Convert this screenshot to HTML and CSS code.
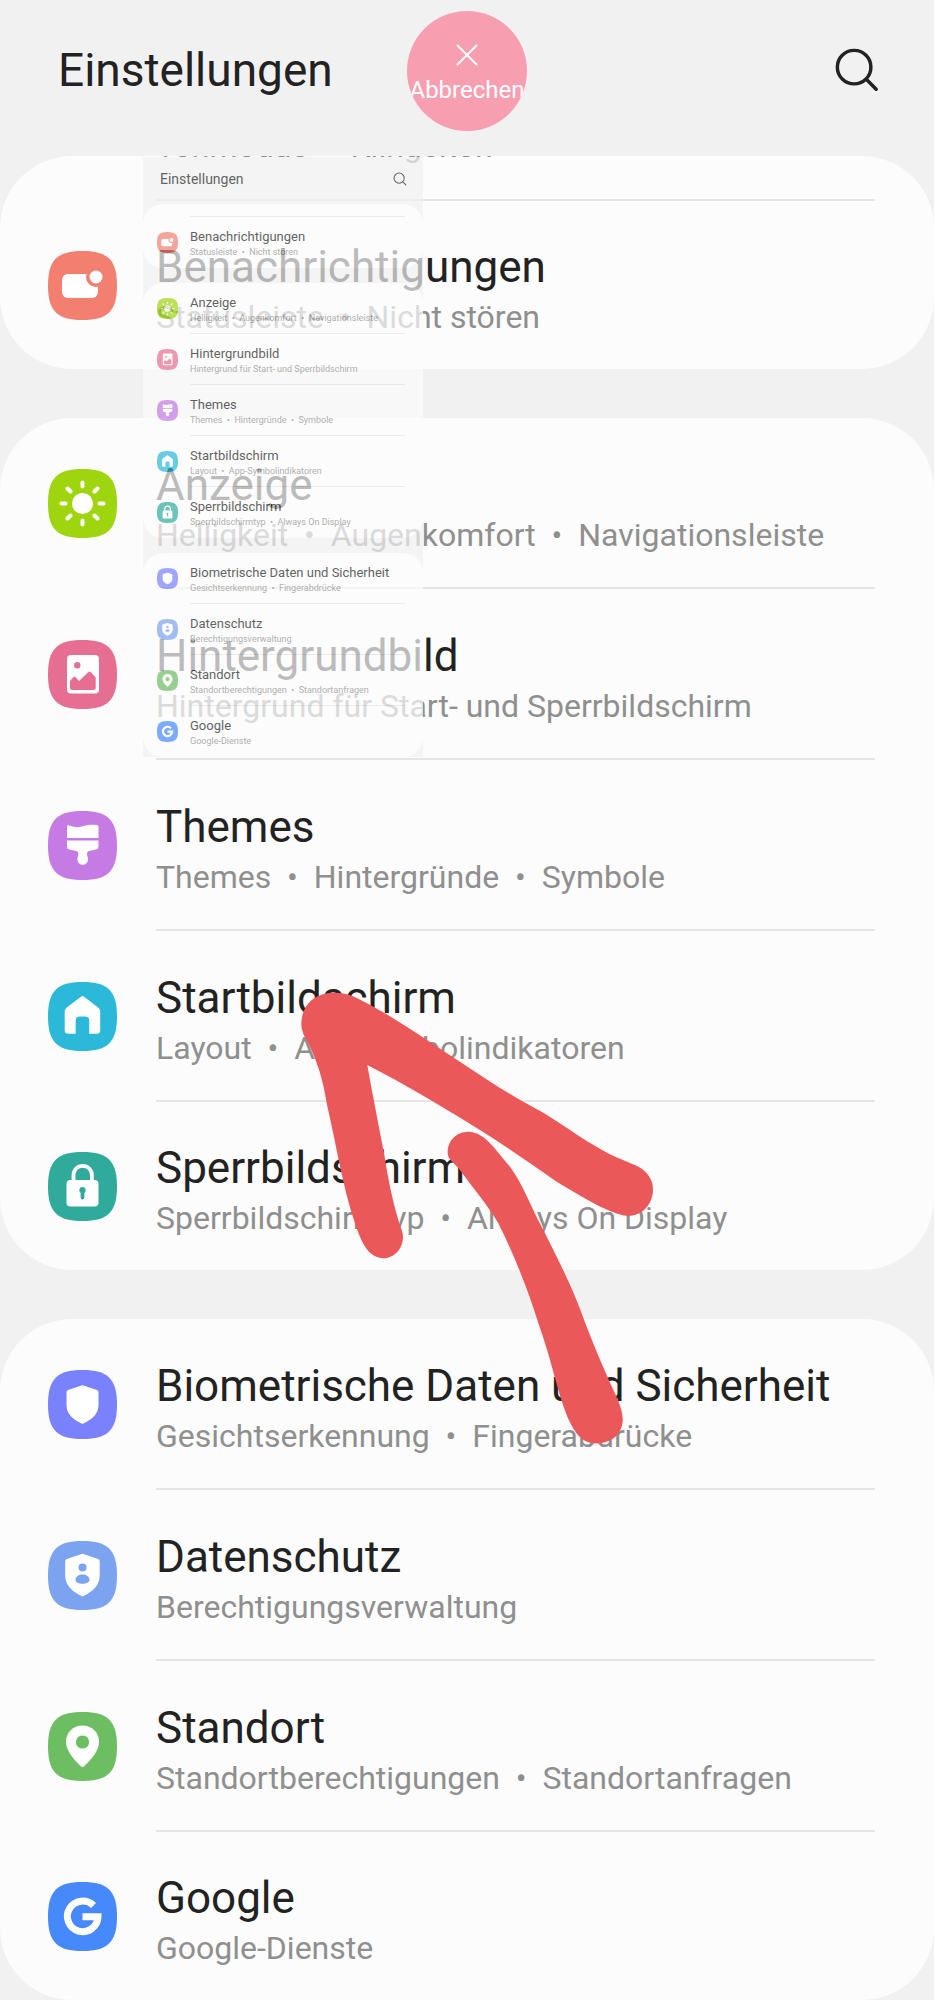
FILE: index.html
```html
<!DOCTYPE html>
<html lang="de">
<head>
    <meta charset="UTF-8">
    <meta name="viewport" content="width=device-width, initial-scale=1.0">
    <title>Einstellungen</title>
    <link rel="stylesheet" href="styles.css">
</head>
<body>
    <!-- Icons -->
    <svg class="sprite" aria-hidden="true">
        <symbol id="search" viewBox="0 0 48 48">
            <path d="M34.500 34.500L44 44M38.500 21A17.500 17.500 0 1 1 3.500 21A17.500 17.500 0 0 1 38.500 21Z" fill="none" stroke="#222" stroke-width="3.600" stroke-linecap="round"/>
        </symbol>
        <symbol id="tile" viewBox="0 0 69 69">
            <path d="M34.500 0C60 0 69 9 69 34.500S60 69 34.500 69 0 60 0 34.500 9 0 34.500 0Z"/>
        </symbol>
        <symbol id="notifications" viewBox="0 0 69 69">
            <use href="#tile" fill="#f37f70"/>
            <rect x="14" y="23" width="36" height="24" rx="6" fill="#fff"/>
            <circle cx="48" cy="26" r="10" fill="#f37f70"/>
            <circle cx="48" cy="26" r="6.500" fill="#fff"/>
        </symbol>
        <symbol id="display" viewBox="0 0 69 69">
            <use href="#tile" fill="#9fd50f"/>
            <circle cx="34.500" cy="34.500" r="10.500" fill="#fff"/>
            <path d="M34.500 13.500v4M34.500 51.500v4M13.500 34.500h4M51.500 34.500h4M19.500 19.500l3 3M46.500 46.500l3 3M49.500 19.500l-3 3M22.500 46.500l-3 3" stroke="#fff" stroke-width="4" stroke-linecap="round"/>
        </symbol>
        <symbol id="wallpaper" viewBox="0 0 69 69">
            <use href="#tile" fill="#e66e93"/>
            <rect x="19" y="15" width="32" height="38.500" rx="4" fill="#fff"/>
            <circle cx="29.300" cy="25.300" r="3.200" fill="#e66e93"/>
            <path d="M22 41l3.500-4q1-1 2 0l3.500 4 9.500-9q1.200-1 2.200 0l5 5.500v10.500q0 2-2 2h-21.700q-2 0-2-2z" fill="#e66e93"/>
        </symbol>
        <symbol id="themes" viewBox="0 0 69 69">
            <use href="#tile" fill="#c57be3"/>
            <path d="M19 15.500q0-1.500 1.500-1.200c5 1.500 8 2.700 13 1.200s9-2 15.500-1.500q1.500 0 1.500 1.500v11.500h-31.500z" fill="#fff"/>
            <path d="M19 29.500h31.500v6q0 2.500-2.500 3l-7 1.500q-2 .5-2 2.500c0 2 1 4 1 6a5.300 5.300 0 0 1-10.600 0c0-2 1-4 1-6q0-2-2-2.500l-7-1.500q-2.400-.5-2.400-3z" fill="#fff"/>
        </symbol>
        <symbol id="home" viewBox="0 0 69 69">
            <use href="#tile" fill="#2bb8d9"/>
            <path d="M33 14.700q1.500-1.200 3 0l14.500 11q1.700 1.500 1.700 3.500v19q0 3.500-3.500 3.500h-7.500v-13.200q0-4-4-4h-5.500q-4 0-4 4v13.200h-7.500q-3.500 0-3.500-3.500v-19q0-2 1.700-3.500z" fill="#fff"/>
        </symbol>
        <symbol id="lock" viewBox="0 0 69 69">
            <use href="#tile" fill="#30ab9b"/>
            <path d="M25.500 30v-7a9.200 9.200 0 0 1 18.400 0v7" fill="none" stroke="#fff" stroke-width="3.800"/>
            <rect x="18.500" y="28" width="32" height="26.500" rx="4" fill="#fff"/>
            <path d="M34.500 35a3.300 3.300 0 0 1 1.900 6v4.500a1.900 1.900 0 0 1-3.800 0V41a3.300 3.300 0 0 1 1.900-6z" fill="#30ab9b"/>
        </symbol>
        <symbol id="shield" viewBox="0 0 69 69">
            <use href="#tile" fill="#7981fc"/>
            <path d="M33.500 15.500q1-.4 2 0l13.500 4.500q1.500.5 1.500 2V35c0 9-6 14-15 18.500q-1 .4-2 0C24.500 49 18.500 44 18.500 35V22q0-1.500 1.500-2z" fill="#fff"/>
        </symbol>
        <symbol id="privacy" viewBox="0 0 69 69">
            <use href="#tile" fill="#7ba3f0"/>
            <path d="M33.500 13q1-.4 2 0L50 18q1.700.6 1.700 2.300V34.500c0 10-7 16-16.200 20.500q-1 .4-2 0C24.300 50.500 17.200 44.500 17.200 34.500V20.300q0-1.700 1.700-2.300z" fill="#fff"/>
            <circle cx="34.500" cy="26.500" r="4" fill="#7ba3f0"/>
            <path d="M27.500 39c0-7.500 14-7.500 14 0 0 5-14 5-14 0z" fill="#7ba3f0"/>
        </symbol>
        <symbol id="location" viewBox="0 0 69 69">
            <use href="#tile" fill="#6dbd63"/>
            <path d="M34.500 13.500c9.500 0 16.500 7 16.500 16.200 0 9-7.500 17.300-14.800 24.600q-1.700 1.500-3.400 0C25.500 47 18 38.700 18 29.700 18 20.500 25 13.500 34.500 13.500z" fill="#fff"/>
            <circle cx="34.500" cy="30" r="6.600" fill="#6dbd63"/>
        </symbol>
        <symbol id="google" viewBox="0 0 69 69">
            <use href="#tile" fill="#4689fa"/>
            <path d="M45.500 23.500A15.300 15.300 0 1 0 50 34.700H34.500" fill="none" stroke="#fff" stroke-width="7"/>
        </symbol>
    </svg>

    <div class="screen">
        <header class="header">
            <h1 class="page-title">Einstellungen</h1>
            <button class="search-btn" aria-label="Suche"><svg><use href="#search"/></svg></button>
        </header>

        <main class="settings">
            <section class="card">
                <div class="row-rest"><span>Tonmodus&nbsp; •&nbsp; Klingelton</span></div>
                <a class="row" href="#">
                    <svg class="icon"><use href="#notifications"/></svg>
                    <span class="label"><span class="name">Benachrichtigungen</span><span class="info">Statusleiste&nbsp; •&nbsp; Nicht stören</span></span>
                </a>
            </section>

            <section class="card">
                <a class="row" href="#">
                    <svg class="icon"><use href="#display"/></svg>
                    <span class="label"><span class="name">Anzeige</span><span class="info">Helligkeit&nbsp; •&nbsp; Augenkomfort&nbsp; •&nbsp; Navigationsleiste</span></span>
                </a>
                <a class="row" href="#">
                    <svg class="icon"><use href="#wallpaper"/></svg>
                    <span class="label"><span class="name">Hintergrundbild</span><span class="info">Hintergrund für Start- und Sperrbildschirm</span></span>
                </a>
                <a class="row" href="#">
                    <svg class="icon"><use href="#themes"/></svg>
                    <span class="label"><span class="name">Themes</span><span class="info">Themes&nbsp; •&nbsp; Hintergründe&nbsp; •&nbsp; Symbole</span></span>
                </a>
                <a class="row" href="#">
                    <svg class="icon"><use href="#home"/></svg>
                    <span class="label"><span class="name">Startbildschirm</span><span class="info">Layout&nbsp; •&nbsp; App-Symbolindikatoren</span></span>
                </a>
                <a class="row" href="#">
                    <svg class="icon"><use href="#lock"/></svg>
                    <span class="label"><span class="name">Sperrbildschirm</span><span class="info">Sperrbildschirmtyp&nbsp; •&nbsp; Always On Display</span></span>
                </a>
            </section>

            <section class="card">
                <a class="row" href="#">
                    <svg class="icon"><use href="#shield"/></svg>
                    <span class="label"><span class="name">Biometrische Daten und Sicherheit</span><span class="info">Gesichtserkennung&nbsp; •&nbsp; Fingerabdrücke</span></span>
                </a>
                <a class="row" href="#">
                    <svg class="icon"><use href="#privacy"/></svg>
                    <span class="label"><span class="name">Datenschutz</span><span class="info">Berechtigungsverwaltung</span></span>
                </a>
                <a class="row" href="#">
                    <svg class="icon"><use href="#location"/></svg>
                    <span class="label"><span class="name">Standort</span><span class="info">Standortberechtigungen&nbsp; •&nbsp; Standortanfragen</span></span>
                </a>
                <a class="row" href="#">
                    <svg class="icon"><use href="#google"/></svg>
                    <span class="label"><span class="name">Google</span><span class="info">Google-Dienste</span></span>
                </a>
            </section>
        </main>

        <!-- Schwebende Vorschau beim Ziehen -->
        <div class="preview">
            <div class="header">
                <span class="page-title">Einstellungen</span>
                <svg class="search-icon"><use href="#search"/></svg>
            </div>
            <div class="settings">
                <div class="card">
                    <div class="row-rest"></div>
                    <div class="row">
                        <svg class="icon"><use href="#notifications"/></svg>
                        <span class="label"><span class="name">Benachrichtigungen</span><span class="info">Statusleiste&nbsp; •&nbsp; Nicht stören</span></span>
                    </div>
                </div>
                <div class="card">
                    <div class="row">
                        <svg class="icon"><use href="#display"/></svg>
                        <span class="label"><span class="name">Anzeige</span><span class="info">Helligkeit&nbsp; •&nbsp; Augenkomfort&nbsp; •&nbsp; Navigationsleiste</span></span>
                    </div>
                    <div class="row">
                        <svg class="icon"><use href="#wallpaper"/></svg>
                        <span class="label"><span class="name">Hintergrundbild</span><span class="info">Hintergrund für Start- und Sperrbildschirm</span></span>
                    </div>
                    <div class="row">
                        <svg class="icon"><use href="#themes"/></svg>
                        <span class="label"><span class="name">Themes</span><span class="info">Themes&nbsp; •&nbsp; Hintergründe&nbsp; •&nbsp; Symbole</span></span>
                    </div>
                    <div class="row">
                        <svg class="icon"><use href="#home"/></svg>
                        <span class="label"><span class="name">Startbildschirm</span><span class="info">Layout&nbsp; •&nbsp; App-Symbolindikatoren</span></span>
                    </div>
                    <div class="row">
                        <svg class="icon"><use href="#lock"/></svg>
                        <span class="label"><span class="name">Sperrbildschirm</span><span class="info">Sperrbildschirmtyp&nbsp; •&nbsp; Always On Display</span></span>
                    </div>
                </div>
                <div class="card">
                    <div class="row">
                        <svg class="icon"><use href="#shield"/></svg>
                        <span class="label"><span class="name">Biometrische Daten und Sicherheit</span><span class="info">Gesichtserkennung&nbsp; •&nbsp; Fingerabdrücke</span></span>
                    </div>
                    <div class="row">
                        <svg class="icon"><use href="#privacy"/></svg>
                        <span class="label"><span class="name">Datenschutz</span><span class="info">Berechtigungsverwaltung</span></span>
                    </div>
                    <div class="row">
                        <svg class="icon"><use href="#location"/></svg>
                        <span class="label"><span class="name">Standort</span><span class="info">Standortberechtigungen&nbsp; •&nbsp; Standortanfragen</span></span>
                    </div>
                    <div class="row">
                        <svg class="icon"><use href="#google"/></svg>
                        <span class="label"><span class="name">Google</span><span class="info">Google-Dienste</span></span>
                    </div>
                </div>
            </div>
        </div>

        <button class="cancel-btn">
            <svg viewBox="0 0 24 24"><path d="M2 2l20 20M22 2L2 22" stroke="#fff" stroke-width="2"/></svg>
            <span>Abbrechen</span>
        </button>

        <!-- Roter Pfeil -->
        <svg class="arrow" viewBox="0 0 1200 1500" aria-hidden="true">
            <path d="M64 190C66 130 110 96 165 98C205 98 230 112 280 140C340 172 440 240 540 305C620 358 690 405 760 442C840 485 890 528 950 560C990 585 1030 600 1065 615C1100 630 1122 660 1119 695C1114 745 1075 770 1040 767C1000 763 940 732 830 665C740 602 650 540 560 485C460 425 370 370 262 315C275 390 295 490 312 580C325 660 340 740 365 810C380 850 350 895 310 895C265 893 245 850 225 790C190 690 170 560 140 430C130 360 110 300 85 250C70 225 64 210 64 190Z"/>
            <path d="M503 578C503 540 530 515 567 515C612 517 640 560 690 620C730 675 750 735 785 800C830 890 872 970 905 1060C930 1130 960 1200 1000 1290C1020 1330 1035 1370 1025 1400C1015 1435 980 1452 940 1450C900 1445 880 1410 862 1370C830 1290 815 1200 775 1090C745 990 700 880 655 790C620 730 575 680 540 630C520 605 504 600 503 578Z"/>
        </svg>
    </div>
</body>
</html>
```
FILE: styles.css
```css
* {
    box-sizing: border-box;
}

body {
    font-family: Roboto, 'Liberation Sans', sans-serif;
    margin: 0;
    background-color: #f1f1f1;
    color: #222;
}

.sprite {
    position: absolute;
    width: 0;
    height: 0;
}

.screen {
    position: relative;
    overflow: hidden;
}

.header {
    display: flex;
    justify-content: space-between;
    align-items: center;
    height: 156px;
    padding: 0 54px 16px 58px;
}

.page-title {
    margin: 0;
    font-size: 46px;
    font-weight: 400;
}

.search-btn {
    background: none;
    border: none;
    padding: 0;
    width: 46px;
    height: 46px;
    cursor: pointer;
}

.search-btn svg {
    display: block;
    width: 46px;
    height: 46px;
}

.settings {
    display: flex;
    flex-direction: column;
    gap: 49px;
}

.card {
    background-color: #fcfcfc;
    border-radius: 72px;
    overflow: hidden;
}

/* Abgeschnittene Zeile oben */
.row-rest {
    display: flex;
    align-items: flex-start;
    height: 45px;
    margin: 0 59px 0 156px;
    border-bottom: 2px solid #e5e5e7;
    color: #8f8f8f;
    font-size: 32px;
    line-height: 45px;
}

.row-rest span {
    margin-top: -32px;
}

.row {
    display: flex;
    gap: 39px;
    align-items: center;
    padding: 0 59px 0 48px;
    color: inherit;
    text-decoration: none;
}

.icon {
    flex: none;
    width: 69px;
    height: 69px;
}

.label {
    flex: 1;
    display: flex;
    flex-direction: column;
    justify-content: center;
    height: 171px;
    padding-top: 10px;
    border-bottom: 2px solid #e5e5e7;
    white-space: nowrap;
}

.row:last-child .label {
    height: 168px;
    border-bottom: none;
}

.name {
    font-size: 44px;
    line-height: 54px;
}

.info {
    color: #8f8f8f;
    font-size: 32px;
    line-height: 46px;
}

.preview {
    position: absolute;
    top: 157px;
    left: 143px;
    width: 280px;
    background-color: #f1f1f1;
    opacity: 0.7;
}

.preview .header {
    height: 47px;
    padding: 0 16px 4px 17px;
}

.preview .page-title {
    font-size: 14px;
}

.preview .search-icon {
    width: 14px;
    height: 14px;
}

.preview .settings {
    gap: 15px;
}

.preview .card {
    border-radius: 20px;
}

.preview .row-rest {
    height: 13px;
    margin: 0 18px 0 47px;
    border-bottom-width: 1px;
}

.preview .row {
    gap: 12px;
    padding: 0 18px 0 14px;
}

.preview .icon {
    width: 21px;
    height: 21px;
}

.preview .label,
.preview .row:last-child .label {
    height: 51px;
    padding-top: 3px;
    border-bottom-width: 1px;
}

.preview .name {
    font-size: 13px;
    line-height: 16px;
}

.preview .info {
    font-size: 9px;
    line-height: 14px;
}

.cancel-btn {
    position: absolute;
    top: 11px;
    left: calc(50% - 60px);
    display: flex;
    flex-direction: column;
    align-items: center;
    gap: 8px;
    width: 120px;
    height: 120px;
    padding: 32px 0 0;
    border: none;
    border-radius: 50%;
    overflow: hidden;
    background-color: #f79fb1;
    color: white;
    font-family: inherit;
    font-size: 24px;
    line-height: 30px;
    cursor: pointer;
}

.cancel-btn svg {
    flex: none;
    width: 24px;
    height: 24px;
}

.arrow {
    position: absolute;
    top: 960px;
    left: 280px;
    width: 400px;
    height: 500px;
    fill: #eb5859;
    pointer-events: none;
}
```
